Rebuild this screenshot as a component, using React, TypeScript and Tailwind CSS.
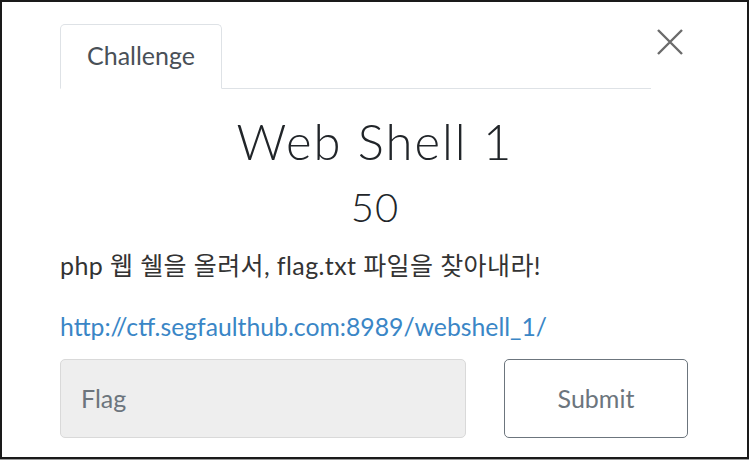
import React from "react";

export default function App() {
  return (
    <div className="w-[750px] h-[460px] bg-white relative" style={{ fontFamily: "Lato, 'Noto Sans CJK KR', sans-serif" }}>
      <div className="w-[749px] h-[459px] border-2 border-[#1a1a1a] shadow-[0_1px_0_#9a9a9a] box-border">
        <div className="pl-[58px] pr-[58px] pt-[22px]">
          {/* header */}
          <div className="flex items-start">
            <div className="w-[591px] h-[65px] border-b border-[#dee2e6] flex">
              <div className="w-[162px] h-[65px] border border-[#dee2e6] border-b-white rounded-t-[5px] bg-white flex items-center justify-center text-[25px] leading-none text-[#495057] pb-[2px]">
                Challenge
              </div>
            </div>
            <div className="flex-1 flex justify-center pt-[4px]">
              <svg width="28" height="28" viewBox="0 0 28 28">
                <path d="M2 2 L26 26 M26 2 L2 26" stroke="#6b6b6b" strokeWidth="2.4" fill="none" />
              </svg>
            </div>
          </div>
          {/* body */}
          <div className="w-[630px]">
            <h3 className="text-center text-[49px] leading-none font-light text-[#212529] mt-[28px] tracking-[2px]">Web Shell 1</h3>
            <h4 className="text-center text-[40px] leading-none font-light text-[#212529] mt-[21px] tracking-[1px]">50</h4>
            <p className="mt-[26px] text-[25px] leading-none text-[#333333] tracking-[0.4px]">php 웹 쉘을 올려서, flag.txt 파일을 찾아내라!</p>
            <p className="mt-[37px] text-[24.75px] leading-none">
              <a className="text-[#3a86c6]" href="#">http://ctf.segfaulthub.com:8989/webshell_1/</a>
            </p>
            <div className="flex mt-[19px] gap-[38px]">
              <div className="w-[406px] h-[79px] bg-[#eeeeee] border border-[#d9d9d9] rounded-[5px] flex items-center pl-[20px] text-[25px] text-[#6c757d]">
                Flag
              </div>
              <div className="w-[184px] h-[79px] bg-white border-[1.5px] border-[#6c757d] rounded-[5px] flex items-center justify-center text-[25px] text-[#6c757d]">
                Submit
              </div>
            </div>
          </div>
        </div>
      </div>
    </div>
  );
}
